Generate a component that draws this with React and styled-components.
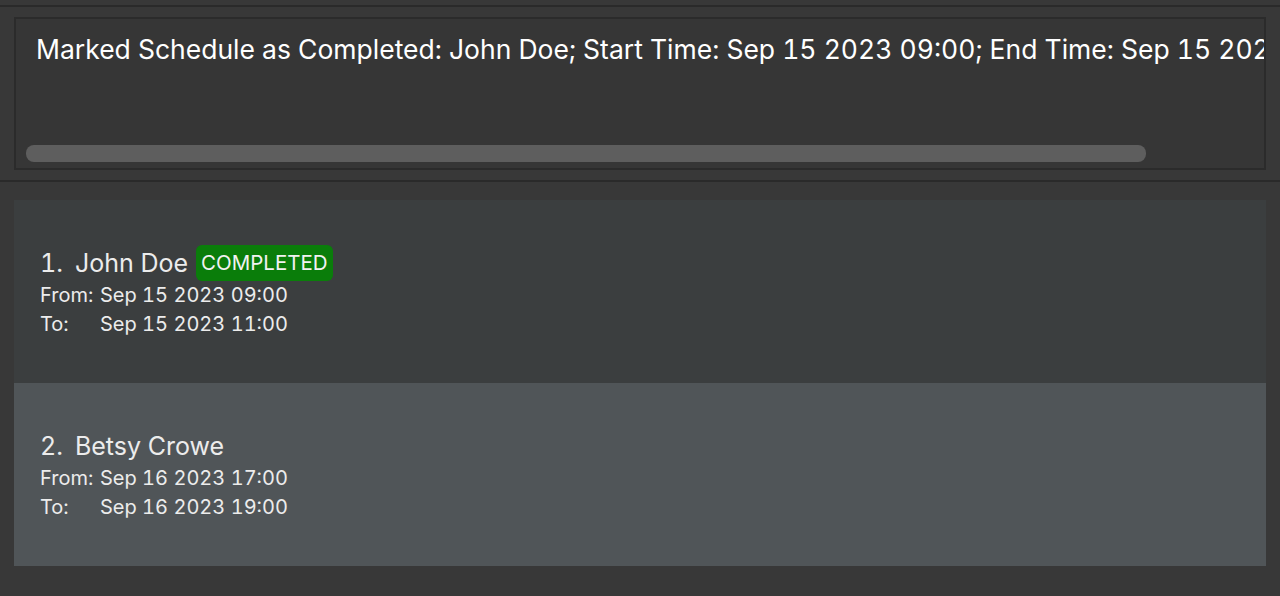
import React from 'react'
import styled, { createGlobalStyle } from 'styled-components'

const GlobalStyle = createGlobalStyle`
  html, body {
    margin: 0;
    padding: 0;
    background: #383838;
    font-family: Inter, "Noto Sans", sans-serif;
    font-variant-numeric: tabular-nums;
  }
`

const schedules = [
  { id: 1, name: 'John Doe', from: 'Sep 15 2023 09:00', to: 'Sep 15 2023 11:00', completed: true },
  { id: 2, name: 'Betsy Crowe', from: 'Sep 16 2023 17:00', to: 'Sep 16 2023 19:00', completed: false },
]

export default function App() {
  return (
    <Page>
      <GlobalStyle />
      <ResultSection>
        <ResultBox>
          <ResultText>
            Marked Schedule as Completed: John Doe; Start Time: Sep 15 2023 09:00; End Time: Sep 15 2023 11:00
          </ResultText>
          <ScrollThumb />
        </ResultBox>
      </ResultSection>
      <ListSection>
        {schedules.map((s, i) => (
          <Card key={s.id} $alt={i % 2 === 1}>
            <NameRow>
              <Index>{s.id}.</Index>
              <Name>{s.name}</Name>
              {s.completed && <Badge>COMPLETED</Badge>}
            </NameRow>
            <TimeRow>
              <Label>From:</Label>
              <span>{s.from}</span>
            </TimeRow>
            <TimeRow>
              <Label>To:</Label>
              <span>{s.to}</span>
            </TimeRow>
          </Card>
        ))}
      </ListSection>
    </Page>
  )
}

const Page = styled.div`
  width: 1280px;
  height: 596px;
  background: #383838;
  padding-top: 5px;
  box-sizing: border-box;
  overflow: hidden;
`

const ResultSection = styled.div`
  border-top: 2px solid #2a2a2a;
  border-bottom: 2px solid #2a2a2a;
  padding: 10px 14px 10px;
`

const ResultBox = styled.div`
  height: 153px;
  box-sizing: border-box;
  border: 2px solid #2b2b2b;
  background: #363636;
  display: flex;
  flex-direction: column;
  overflow: hidden;
  padding: 0 0 6px 10px;
`

const ResultText = styled.div`
  color: #ffffff;
  font-size: 26.5px;
  line-height: 32px;
  white-space: nowrap;
  padding: 14px 0 0 10px;
`

const ScrollThumb = styled.div`
  margin-top: auto;
  width: 1120px;
  height: 17px;
  border-radius: 8px;
  background: #5e5e5e;
`

const ListSection = styled.div`
  padding: 18px 14px 0;
  display: flex;
  flex-direction: column;
`

const Card = styled.div`
  height: 183px;
  box-sizing: border-box;
  background: ${p => (p.$alt ? '#505558' : '#3b3e3f')};
  display: flex;
  flex-direction: column;
  justify-content: center;
  padding: 0 26px;
  color: #ececec;
`

const NameRow = styled.div`
  display: flex;
  align-items: center;
  min-height: 36px;
  font-size: 25px;
  line-height: 30px;
`

const Index = styled.span`
  margin-right: 12px;
`

const Name = styled.span`
  white-space: nowrap;
`

const Badge = styled.span`
  margin-left: 8px;
  background: #0a7d0a;
  color: #f2f2f2;
  font-size: 20.5px;
  line-height: 28px;
  padding: 4px 5px;
  border-radius: 6px;
`

const TimeRow = styled.div`
  display: flex;
  font-size: 20px;
  line-height: 29px;
`

const Label = styled.span`
  width: 60px;
`
